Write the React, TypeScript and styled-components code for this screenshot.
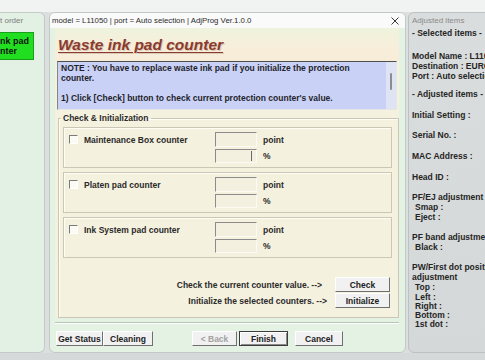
import React from 'react';
import styled, { createGlobalStyle } from 'styled-components';

const GlobalStyle = createGlobalStyle`
  html, body {
    margin: 0;
    padding: 0;
    background: #dcdfdf;
    overflow: hidden;
  }
  body {
    font-family: 'Liberation Sans', Arial, sans-serif;
    color: #262626;
  }
`;

const Screen = styled.div`
  width: 485px;
  height: 360px;
  display: flex;
  flex-direction: column;
  overflow: hidden;
  background: #d6d9d9;
`;

const TopStrip = styled.div`
  height: 12px;
  flex: none;
  background: #f1f2f2;
`;

const Desktop = styled.div`
  display: flex;
  height: 341px;
  flex: none;
  background: #dcdfdf;
`;

// ---------- left window ----------
const LeftWindow = styled.div`
  width: 45px;
  flex: none;
  box-sizing: border-box;
  background: #e3f1e5;
  border: 1px solid #c4cac6;
  border-left: none;
  border-radius: 0 6px 6px 0;
  overflow: hidden;
`;

const LeftTitle = styled.div`
  height: 15px;
  line-height: 16px;
  font-size: 8px;
  color: #7c7c7c;
  white-space: nowrap;
`;

const GreenButton = styled.div`
  margin-top: 4px;
  width: 34px;
  height: 28px;
  box-sizing: border-box;
  background: #21de21;
  border: 1px solid #1a9f1a;
  border-left: none;
  font-size: 9px;
  font-weight: bold;
  line-height: 10px;
  color: #111;
  padding-top: 3px;
  white-space: nowrap;
`;

// ---------- main window ----------
const MainWindow = styled.div`
  width: 357px;
  flex: none;
  margin-left: 4px;
  box-sizing: border-box;
  background: #e4f2e4;
  border: 1px solid #c2c8c4;
  border-radius: 6px;
  overflow: hidden;
  display: flex;
  flex-direction: column;
`;

const TitleBar = styled.div`
  height: 15px;
  flex: none;
  background: #fafafa;
  display: flex;
  align-items: center;
  justify-content: space-between;
  padding: 0 6px 0 2px;
`;

const TitleText = styled.span`
  font-size: 7.8px;
  color: #2a2a2a;
  white-space: nowrap;
`;

const Body = styled.div`
  padding: 0 6px 0 5px;
  display: flex;
  flex-direction: column;
`;

const Panel = styled.div`
  background: #f5f1df;
  display: flex;
  flex-direction: column;
  height: 290px;
`;

const HeadingBar = styled.div`
  height: 33px;
  flex: none;
  display: flex;
  align-items: center;
  padding-left: 3px;
  background: linear-gradient(180deg, #eef3dd 0%, #f7eedb 55%, #f7ecd7 100%);
`;

const Heading = styled.h1`
  margin: 0;
  font-size: 15.5px;
  font-weight: bold;
  font-style: italic;
  color: #8b3a2c;
  text-decoration: underline;
  text-decoration-thickness: 1px;
  text-underline-offset: 2px;
  text-shadow: 1px 1px 0 #d9c9b8;
  white-space: nowrap;
`;

const NoteBox = styled.div`
  height: 49px;
  margin: 0 2px;
  box-sizing: border-box;
  display: flex;
  background: #c9d1f7;
  border-top: 1px solid #4e4e4e;
  border-left: 1px solid #858585;
  border-right: 1px solid #e6e6e6;
  border-bottom: 1px solid #e6e6e6;
`;

const NoteText = styled.div`
  flex: 1;
  padding: 1px 3px;
  font-size: 8.5px;
  font-weight: bold;
  line-height: 10px;
  color: #1f1f2a;
`;

const NoteScroll = styled.div`
  width: 10px;
  flex: none;
  background: #dfe4f4;
  display: flex;
  justify-content: center;
  padding-top: 11px;
`;

const ScrollThumb = styled.div`
  width: 1.5px;
  height: 17px;
  border-radius: 1px;
  background: #8d8d8d;
`;

const GroupBox = styled.fieldset`
  margin: 3px 0 0 3px;
  padding: 0 6px 5px 4px;
  border: 1px solid #cbc7b6;
  box-shadow: inset 1px 1px 0 #fffdf4;
  flex: 1;
  min-width: 0;
`;

const Legend = styled.legend`
  font-size: 8.5px;
  font-weight: bold;
  padding: 0 2px;
  margin-left: -2px;
  line-height: 10px;
  color: #2a2a2a;
`;

const SubBox = styled.div<{ $mt: number }>`
  margin-top: ${({ $mt }) => $mt}px;
  height: 41px;
  box-sizing: border-box;
  border: 1px solid #cbc7b6;
  box-shadow: inset 1px 1px 0 #fffdf4;
  display: flex;
  padding: 4px 0 0 5px;
`;

const CheckArea = styled.div`
  width: 146px;
  height: 15px;
  display: flex;
  align-items: center;
  gap: 6px;
`;

const CheckBox = styled.span`
  width: 7px;
  height: 7px;
  flex: none;
  background: #fbfaf4;
  border-top: 1px solid #7a7a7a;
  border-left: 1px solid #7a7a7a;
  border-right: 1px solid #ffffff;
  border-bottom: 1px solid #ffffff;
`;

const Label = styled.span`
  font-size: 8.5px;
  font-weight: bold;
  white-space: nowrap;
  color: #2a2a2a;
`;

const Fields = styled.div`
  display: flex;
  flex-direction: column;
  gap: 2px;
`;

const FieldRow = styled.div`
  display: flex;
  align-items: center;
  gap: 6px;
`;

const TextInput = styled.div<{ $h: number; $caret?: boolean }>`
  width: 42px;
  height: ${({ $h }) => $h}px;
  box-sizing: border-box;
  background: #f4f0df;
  border-top: 1px solid #8c8c8c;
  border-left: 1px solid #8c8c8c;
  border-right: 1px solid #fbfaf3;
  border-bottom: 1px solid #fbfaf3;
  display: flex;
  justify-content: flex-end;
  padding: 1px 4px 1px 0;

  &::after {
    content: '';
    width: 1px;
    background: ${({ $caret }) => ($caret ? '#6a6a6a' : 'transparent')};
  }
`;

const ActionRow = styled.div<{ $mt: number; $gap: number }>`
  margin-top: ${({ $mt }) => $mt}px;
  height: 15px;
  display: flex;
  justify-content: flex-end;
  align-items: center;
  gap: ${({ $gap }) => $gap}px;
  padding-right: 2px;
`;

const WinButton = styled.button<{ $w: number; $default?: boolean }>`
  width: ${({ $w }) => $w}px;
  height: 15px;
  flex: none;
  margin: 0;
  padding: 0;
  box-sizing: border-box;
  font-family: inherit;
  font-size: 8.5px;
  font-weight: bold;
  color: #222;
  background: #f1f1f1;
  border: 1px solid;
  border-color: #ffffff #6f6f6f #6f6f6f #ffffff;
  ${({ $default }) => $default && 'border-color: #3c3c3c; box-shadow: inset 1px 1px 0 #fff, inset -1px -1px 0 #8a8a8a;'}

  &:disabled {
    color: #a2a2a2;
  }
`;

const Footer = styled.div`
  flex: none;
  display: flex;
  flex-direction: column;
`;

const Separator = styled.div`
  margin-top: 4px;
  height: 1px;
  background: #b9c4b9;
  box-shadow: 0 1px 0 #ffffff;
`;

const ButtonBar = styled.div`
  margin-top: 8px;
  display: flex;
  align-items: center;
  padding-left: 1px;
`;

const Spacer = styled.div<{ $w: number }>`
  width: ${({ $w }) => $w}px;
  flex: none;
`;

// ---------- right window ----------
const SideWindow = styled.div`
  width: 90px;
  flex: none;
  margin-left: 2px;
  box-sizing: border-box;
  background: linear-gradient(180deg, #dadddd 0%, #d5d8d8 100%);
  border: 1px solid #bcc1c1;
  border-radius: 6px 0 0 6px;
  padding: 0 0 0 3px;
  overflow: hidden;
`;

const SideTitle = styled.div`
  height: 15px;
  line-height: 16px;
  font-size: 8px;
  color: #8a8a8a;
  white-space: nowrap;
`;

const SideLine = styled.div<{ $mt?: number; $indent?: boolean }>`
  margin-top: ${({ $mt }) => $mt || 0}px;
  padding-left: ${({ $indent }) => ($indent ? 3 : 0)}px;
  height: 10px;
  line-height: 10px;
  font-size: 8.5px;
  font-weight: bold;
  color: #252525;
  white-space: nowrap;
`;

const counters = [
  { name: 'Maintenance Box counter', mt: 4, caret: true },
  { name: 'Platen pad counter', mt: 4, caret: false },
  { name: 'Ink System pad counter', mt: 4, caret: false }
];

const sideLines: { text: string; mt?: number; indent?: boolean }[] = [
  { text: '- Selected items -' },
  { text: 'Model Name : L11050', mt: 13 },
  { text: 'Destination : EURO' },
  { text: 'Port : Auto selection' },
  { text: '- Adjusted items -', mt: 8 },
  { text: 'Initial Setting :', mt: 11 },
  { text: 'Serial No. :', mt: 10 },
  { text: 'MAC Address :', mt: 11 },
  { text: 'Head ID :', mt: 11 },
  { text: 'PF/EJ adjustment', mt: 10 },
  { text: 'Smap :', indent: true },
  { text: 'Eject :', indent: true },
  { text: 'PF band adjustment', mt: 10 },
  { text: 'Black :', indent: true },
  { text: 'PW/First dot position', mt: 10 },
  { text: 'adjustment' },
  { text: 'Top :', indent: true },
  { text: 'Left :', indent: true },
  { text: 'Right :', indent: true, mt: -1 },
  { text: 'Bottom :', indent: true, mt: -1 },
  { text: '1st dot :', indent: true, mt: -1 }
];

function CloseIcon () {
  return (
    <svg width='8' height='8' viewBox='0 0 8 8'>
      <path d='M0.5 0.5 L7.5 7.5 M7.5 0.5 L0.5 7.5' stroke='#3a3a3a' strokeWidth='1' fill='none' />
    </svg>
  );
}

export default function App (): React.ReactElement {
  return (
    <Screen>
      <GlobalStyle />
      <TopStrip />
      <Desktop>
        <LeftWindow>
          <LeftTitle>t order</LeftTitle>
          <GreenButton>
            nk pad
            <br />
            nter
          </GreenButton>
        </LeftWindow>

        <MainWindow>
          <TitleBar>
            <TitleText>model = L11050 | port = Auto selection | AdjProg Ver.1.0.0</TitleText>
            <CloseIcon />
          </TitleBar>
          <Body>
            <Panel>
              <HeadingBar>
                <Heading>Waste ink pad counter</Heading>
              </HeadingBar>
              <NoteBox>
                <NoteText>
                  NOTE : You have to replace waste ink pad if you initialize the protection
                  <br />
                  counter.
                  <br />
                  <br />
                  1) Click [Check] button to check current protection counter&apos;s value.
                </NoteText>
                <NoteScroll>
                  <ScrollThumb />
                </NoteScroll>
              </NoteBox>
              <GroupBox>
                <Legend>Check &amp; Initialization</Legend>
                {counters.map((c) => (
                  <SubBox key={c.name} $mt={c.mt}>
                    <CheckArea>
                      <CheckBox />
                      <Label>{c.name}</Label>
                    </CheckArea>
                    <Fields>
                      <FieldRow>
                        <TextInput $h={15} />
                        <Label>point</Label>
                      </FieldRow>
                      <FieldRow>
                        <TextInput $h={14} $caret={c.caret} />
                        <Label>%</Label>
                      </FieldRow>
                    </Fields>
                  </SubBox>
                ))}
                <ActionRow $mt={19} $gap={13}>
                  <Label>Check the current counter value. --&gt;</Label>
                  <WinButton $w={55}>Check</WinButton>
                </ActionRow>
                <ActionRow $mt={1} $gap={8}>
                  <Label>Initialize the selected counters. --&gt;</Label>
                  <WinButton $w={55}>Initialize</WinButton>
                </ActionRow>
              </GroupBox>
            </Panel>
            <Footer>
              <Separator />
              <ButtonBar>
                <WinButton $w={47}>Get Status</WinButton>
                <WinButton $w={50}>Cleaning</WinButton>
                <Spacer $w={39} />
                <WinButton $w={45} disabled>&lt; Back</WinButton>
                <Spacer $w={2} />
                <WinButton $w={49} $default>Finish</WinButton>
                <Spacer $w={7} />
                <WinButton $w={48}>Cancel</WinButton>
              </ButtonBar>
            </Footer>
          </Body>
        </MainWindow>

        <SideWindow>
          <SideTitle>Adjusted items</SideTitle>
          {sideLines.map((l, i) => (
            <SideLine key={i} $mt={l.mt} $indent={l.indent}>{l.text}</SideLine>
          ))}
        </SideWindow>
      </Desktop>
    </Screen>
  );
}
